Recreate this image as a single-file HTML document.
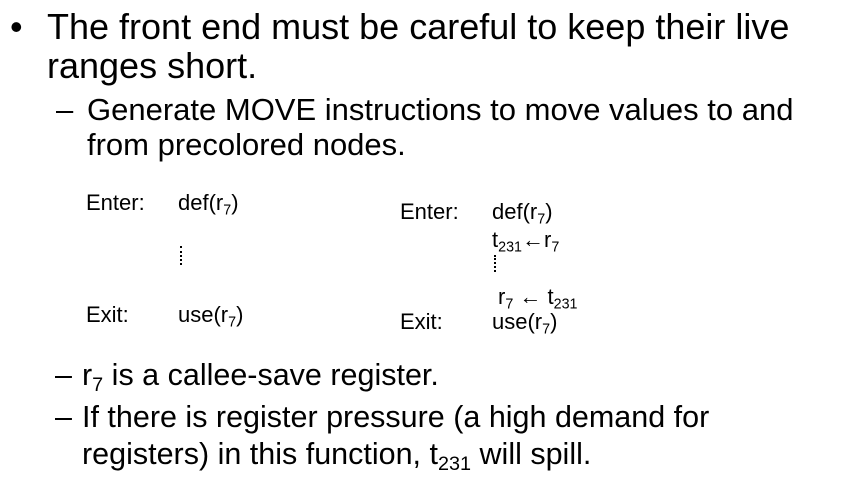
<!DOCTYPE html>
<html><head><meta charset="utf-8"><style>
body{margin:0;width:851px;height:478px;background:#fff;position:relative;overflow:hidden;font-family:"Liberation Sans",Arial,sans-serif;color:#000}
.t{position:absolute;white-space:nowrap;line-height:1}
.b{font-size:36px}
.s{font-size:31px}
.m{font-size:22px}
.q{font-size:30.5px}
sub{font-size:0.65em;vertical-align:-0.3em;line-height:0}
.d{position:absolute;width:2px;border-left:2px dotted #000}
</style></head><body>
<div class="t b" style="left:10px;top:9px">•</div>
<div class="t b" style="left:47px;top:9px">The front end must be careful to keep their live</div>
<div class="t b" style="left:47px;top:48px">ranges short.</div>
<div class="t s" style="left:56px;top:94px">–</div>
<div class="t s" style="left:87px;top:94px">Generate MOVE instructions to move values to and</div>
<div class="t s" style="left:87px;top:129px">from precolored nodes.</div>

<div class="t m" style="left:86px;top:192px">Enter:</div>
<div class="t m" style="left:178px;top:192px">def(r<sub>7</sub>)</div>
<div class="d" style="left:180px;top:246px;height:19px"></div>
<div class="t m" style="left:86px;top:304px">Exit:</div>
<div class="t m" style="left:178px;top:304px">use(r<sub>7</sub>)</div>

<div class="t m" style="left:400px;top:201px">Enter:</div>
<div class="t m" style="left:492px;top:201px">def(r<sub>7</sub>)</div>
<div class="t m" style="left:492px;top:229px">t<sub>231</sub>←r<sub>7</sub></div>
<div class="d" style="left:494px;top:255px;height:17px"></div>
<div class="t m" style="left:498px;top:286px">r<sub>7</sub> ← t<sub>231</sub></div>
<div class="t m" style="left:400px;top:311px">Exit:</div>
<div class="t m" style="left:492px;top:311px">use(r<sub>7</sub>)</div>

<div class="t q" style="left:55px;top:360px">–</div>
<div class="t q" style="left:82px;top:360px">r<sub>7</sub> is a callee-save register.</div>
<div class="t q" style="left:55px;top:402px">–</div>
<div class="t q" style="left:82px;top:402px">If there is register pressure (a high demand for</div>
<div class="t q" style="left:82px;top:439px">registers) in this function, t<sub>231</sub> will spill.</div>
</body></html>
